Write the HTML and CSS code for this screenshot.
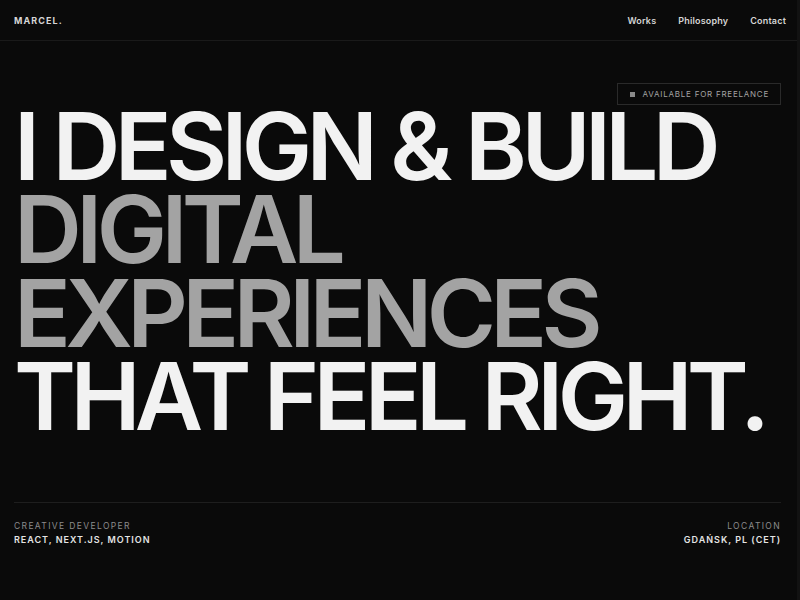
FILE: index.html
```html
<!DOCTYPE html>
<html lang="en">
<head>
<meta charset="utf-8">
<title>Marcel — Creative Developer</title>
<link rel="stylesheet" href="styles.css">
</head>
<body>
<header class="site-header">
  <a class="logo" href="#">MARCEL.</a>
  <nav class="nav">
    <a href="#works">Works</a>
    <a href="#philosophy">Philosophy</a>
    <a href="#contact">Contact</a>
  </nav>
</header>
<main>
  <section class="hero">
    <div class="badge"><span class="badge-dot"></span>AVAILABLE FOR FREELANCE</div>
    <h1 class="headline">
      <span class="line">I DESIGN &amp; BUILD</span>
      <span class="line dim">DIGITAL</span>
      <span class="line dim">EXPERIENCES</span>
      <span class="line">THAT FEEL RIGHT.</span>
    </h1>
    <div class="meta">
      <div class="meta-item">
        <div class="meta-label">CREATIVE DEVELOPER</div>
        <div class="meta-value">REACT, NEXT.JS, MOTION</div>
      </div>
      <div class="meta-item right">
        <div class="meta-label">LOCATION</div>
        <div class="meta-value">GDAŃSK, PL (CET)</div>
      </div>
    </div>
  </section>
</main>
</body>
</html>
```
FILE: styles.css
```css
html {
  background: #0a0a0a;
}
body {
  margin: 0;
  background: #0a0a0a;
  color: #f2f2f2;
  font-family: Inter, "Liberation Sans", sans-serif;
  border-right: 3px solid #121212;
  min-height: 600px;
  box-sizing: border-box;
}
a {
  color: inherit;
  text-decoration: none;
}
.site-header {
  height: 41px;
  box-sizing: border-box;
  border-bottom: 1px solid #1a1a1a;
  display: flex;
  align-items: center;
  justify-content: space-between;
  padding: 0 11px 0 14px;
}
.logo {
  font-size: 9px;
  font-weight: 700;
  letter-spacing: 0.12em;
  color: #d6d6d6;
}
.nav {
  display: flex;
  gap: 22px;
}
.nav a {
  font-size: 9px;
  font-weight: 600;
  letter-spacing: 0.02em;
  color: #d4d4d4;
}
.hero {
  height: 559px;
  box-sizing: border-box;
  display: flex;
  flex-direction: column;
  padding: 42px 16px 0 14px;
}
.badge {
  align-self: flex-end;
  height: 22px;
  box-sizing: border-box;
  border: 1px solid #2a2a2a;
  display: flex;
  align-items: center;
  gap: 8px;
  padding: 0 11px 0 12px;
  font-size: 8px;
  letter-spacing: 0.095em;
  color: #a3a3a3;
}
.badge-dot {
  width: 5px;
  height: 5px;
  background: #8a8a8a;
}
.headline {
  margin: 0;
  font-size: 94px;
  font-weight: 600;
  line-height: 83.3px;
  letter-spacing: -0.06em;
  color: #f2f2f2;
}
.line {
  display: block;
  white-space: nowrap;
}
.dim {
  color: #a3a3a3;
}
.meta {
  margin-top: 64px;
  border-top: 1px solid #1e1e1e;
  padding-top: 18px;
  display: flex;
  justify-content: space-between;
}
.meta-item {
  display: flex;
  flex-direction: column;
  gap: 3px;
}
.meta-item.right {
  text-align: right;
}
.meta-label {
  font-size: 8.5px;
  letter-spacing: 0.16em;
  color: #8c8c8c;
}
.meta-value {
  font-size: 9px;
  font-weight: 600;
  letter-spacing: 0.11em;
  color: #e4e4e4;
}
```
